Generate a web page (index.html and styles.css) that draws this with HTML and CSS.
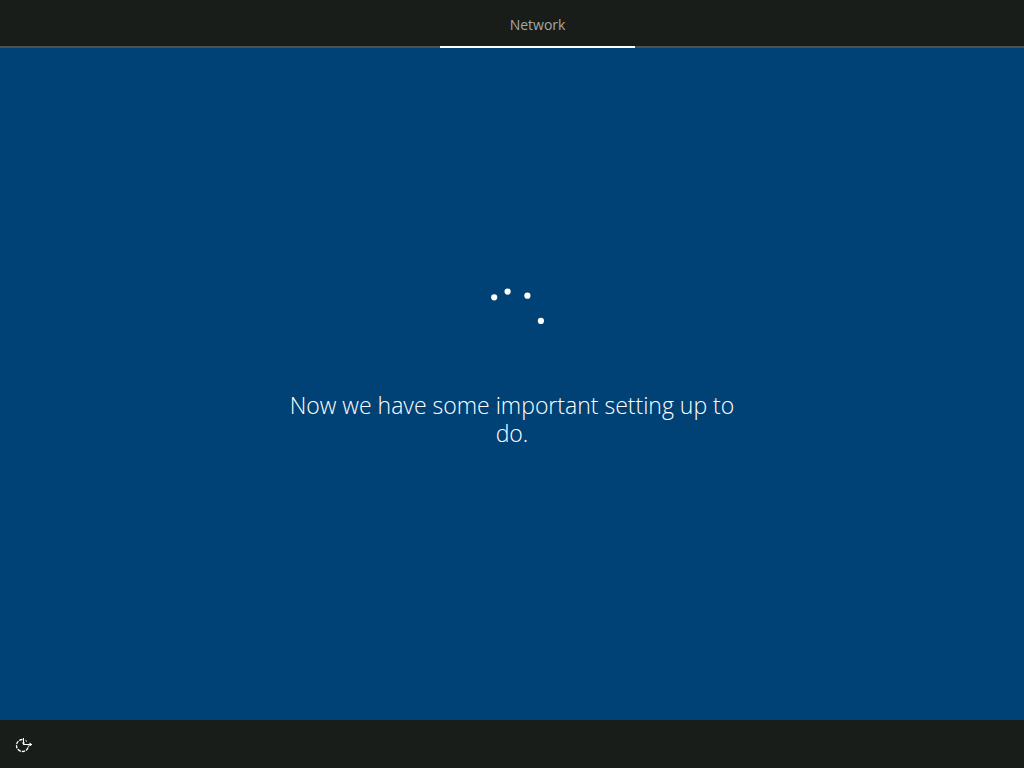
FILE: index.html
```html
<!DOCTYPE html>
<html lang="en">
<head>
<meta charset="utf-8">
<meta name="viewport" content="width=device-width, initial-scale=1">
<title>Network</title>
<link rel="stylesheet" href="styles.css">
</head>
<body>
<header class="top-bar">
  <nav class="tabs">
    <a class="tab" href="#network" aria-current="step">Network</a>
  </nav>
</header>
<main class="stage" id="network">
  <svg class="spinner" width="60" height="60" viewBox="0 0 60 60" role="img" aria-label="Loading">
    <circle cx="12.2" cy="15.3" r="3.1"/>
    <circle cx="25.6" cy="9.6" r="3.1"/>
    <circle cx="45.4" cy="13.7" r="3.1"/>
    <circle cx="58.9" cy="38.9" r="3.1"/>
  </svg>
  <h1 class="message">Now we have some important setting up to do.</h1>
</main>
<footer class="bottom-bar">
  <button class="access" type="button" aria-label="Ease of access">
    <svg width="18" height="16" viewBox="0 0 18 16" aria-hidden="true">
      <path class="ring" d="M7.5 2.5a6 6 0 1 0 6 6"/>
      <path class="hands" d="M10.5 3.3l1.5 1.2"/>
      <path class="hands" d="M8.5 1v6.5H17"/>
      <path class="head" d="M7 5.5h3L8.500 8zM14.500 5.500v4l2.800-2z"/>
    </svg>
  </button>
</footer>
</body>
</html>
```
FILE: styles.css
```css
* {
  box-sizing: border-box;
}

body {
  margin: 0;
  min-height: 100vh;
  display: flex;
  flex-direction: column;
  background: #004275;
  color: #fff;
  font-family: "Open Sans", "Noto Sans", sans-serif;
}

.top-bar {
  background: #191d19;
}

.tabs {
  height: 48px;
  display: grid;
  grid-template-columns: 43% 19% 1fr;
  background: linear-gradient(#4d504d, #4d504d) bottom / 100% 2px no-repeat;
}

.tab {
  grid-column: 2;
  display: flex;
  align-items: center;
  justify-content: center;
  padding-top: 2px;
  border-bottom: 2px solid #fff;
  color: #a6a8a6;
  font-size: 14px;
  text-decoration: none;
}

.stage {
  flex: 1;
  display: flex;
  flex-direction: column;
  align-items: center;
  justify-content: center;
  gap: 49px;
  padding: 0 16px 39px;
}

.spinner {
  fill: #fff;
  overflow: visible;
}

.message {
  margin: 0;
  max-width: 480px;
  font-size: 23px;
  font-weight: 340;
  line-height: 28px;
  text-align: center;
}

.bottom-bar {
  height: 48px;
  display: flex;
  align-items: center;
  padding: 2px 15px 0;
  background: #191d19;
}

.access {
  display: flex;
  padding: 0;
  border: 0;
  background: none;
  color: #fff;
}

.ring,
.hands {
  fill: none;
  stroke: currentColor;
}

.ring {
  stroke-width: 1.3;
  stroke-dasharray: 3.4 1;
}

.head {
  fill: currentColor;
}
```
